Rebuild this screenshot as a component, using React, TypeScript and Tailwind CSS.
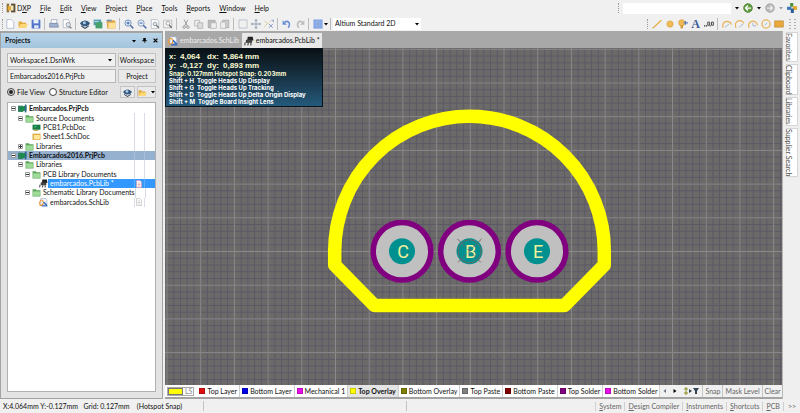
import type { ReactNode } from "react";

type IconName = keyof typeof icons;

const icons = {
    newDoc: <path d="M3 1h7l4 4v10H3z" fill="#fff" stroke="#8fa3c4" />,
    open: <><path d="M1 4h5l1 2h6v8H1z" fill="#e0a93a" /><path d="M4 8h12l-3 6H1z" fill="#ffd877" /></>,
    save: <><path d="M1 1h13l1 1v13H1z" fill="#4f74c8" /><path d="M4 1h8v6H4z" fill="#e8effc" /><path d="M5 10h7v5H5z" fill="#dde6f7" /></>,
    print: <><path d="M4 1h9l-1 6H3z" fill="#fff" stroke="#8793a8" /><path d="M1 7h13l1 6H1z" fill="#9fb2d2" stroke="#6c7c98" /></>,
    preview: <><path d="M2 1h8l2 3v10H2z" fill="#fff" stroke="#9aa3b3" /><circle cx="10" cy="9" r="3.5" fill="#dbe5f2" stroke="#777" /><path d="M12 12l3 3" stroke="#777" strokeWidth="2" /></>,
    layers: <><path d="M0 7c4-6 12-6 16 0-4 6-12 6-16 0z" fill="#33587f" /><path d="M2 10l6 4 6-4v2l-6 4-6-4z" fill="#2b3d57" /><circle cx="7" cy="6" r="2.500" fill="#a7c8e6" /></>,
    board: <><path d="M1 1h12v9H1z" fill="#4f9bb0" /><path d="M4 5h11v10H4z" fill="#45a06a" /><path d="M2 3h7v2H2z" fill="#aed4e2" /></>,
    sheet: <><path d="M1 2h12l2 2v11H2z" fill="#e2a944" /><path d="M4 6h11v9H4z" fill="#ffe29a" /><path d="M1 1h8v3H1z" fill="#7d93a9" /></>,
    zoomIn: <><circle cx="6.500" cy="6.500" r="5" fill="#e4effc" stroke="#6f8cb8" strokeWidth="1.500" /><path d="M10 10l5 5" stroke="#5675a8" strokeWidth="2.500" /><path d="M4 6.500h5M6.500 4v5" stroke="#345c9e" strokeWidth="1.500" /></>,
    zoomOut: <><circle cx="6.500" cy="6.500" r="5" fill="#e4effc" stroke="#8a9cba" strokeWidth="1.500" /><path d="M10 10l5 5" stroke="#5675a8" strokeWidth="2.500" /><path d="M4 6.500h5" stroke="#345c9e" strokeWidth="1.500" /></>,
    zoomPage: <><path d="M2 1h9l3 3v11H2z" fill="#fff" stroke="#9aa3b3" /><circle cx="8" cy="8" r="3" fill="#dbe5f2" stroke="#777" /><path d="M10 10l4 4" stroke="#666" strokeWidth="2" /></>,
    zoomArea: <><path d="M1 2h13v12H1z" fill="#f5f5f5" stroke="#a2a2a2" /><circle cx="8" cy="7" r="3" fill="#fff" stroke="#777" /><path d="M10 10l4 4" stroke="#666" strokeWidth="2" /></>,
    cut: <><path d="M5 1l5 10M11 1L6 11" stroke="#999" strokeWidth="1.500" /><circle cx="5" cy="13" r="2" fill="none" stroke="#999" strokeWidth="1.500" /><circle cx="11" cy="13" r="2" fill="none" stroke="#999" strokeWidth="1.500" /></>,
    copy: <><path d="M1 2h8v9H1z" fill="#eee" stroke="#a0a0a0" /><path d="M6 6h8v9H6z" fill="#ddd" stroke="#a0a0a0" /></>,
    paste: <><path d="M2 2h11v12H2z" fill="#bbb" stroke="#999" /><path d="M6 6h9v9H6z" fill="#eee" stroke="#aaa" /></>,
    stamp: <><path d="M4 2h10v12H4z" fill="#ccc" stroke="#999" /><path d="M1 5h8v10H1z" fill="#eee" stroke="#aaa" /></>,
    marquee: <path d="M1.500 1.500h13v13h-13z" fill="none" stroke="#a2aab8" />,
    move: <path d="M8 0v16M0 8h16M6 3l2-2 2 2M6 13l2 2 2-2M3 6L1 8l2 2M13 6l2 2-2 2" fill="none" stroke="#8590a5" strokeWidth="1.300" />,
    deselect: <><path d="M1 3l4 4M1 12l9-9" stroke="#d2b76a" strokeWidth="1.500" strokeDasharray="2 1" /><path d="M8 8l6 6M14 8l-6 6M12 2h3v3" stroke="#8196c4" strokeWidth="1.500" fill="none" /></>,
    undo: <><path d="M4 5c5-3 11 1 6 9" fill="none" stroke="#6b90d6" strokeWidth="2.500" /><path d="M1 2v7h7z" fill="#6b90d6" /></>,
    redo: <><path d="M12 5C7 2 1 6 6 14" fill="none" stroke="#bbb" strokeWidth="2.500" /><path d="M15 2v7H8z" fill="#bbb" /></>,
    grid: <path d="M1 1h14v14H1zM1 5.500h14M1 10h14M5.500 1v14M10 1v14" fill="#84a5df" stroke="#9bb7ea" />,
    line: <path d="M1 15L15 2" stroke="#e6a93f" strokeWidth="2" />,
    pad: <circle cx="8" cy="8" r="5" fill="#f0ba55" stroke="#d59a35" />,
    via: <><circle cx="6" cy="6" r="5" fill="#f0ba55" stroke="#d59a35" /><path d="M4 10h4v5H4z" fill="#d59a35" /><path d="M9 6h7M12 3v6" stroke="#5c80ba" strokeWidth="2" /></>,
    coord: <><path d="M0 11h2M3 11h2" stroke="#333" strokeWidth="2" /><path d="M6 5h3v5H6zM12 5h3v5h-3zM10 10v2" fill="none" stroke="#444" strokeWidth="1.500" /></>,
    arc1: <><path d="M2 14A7 7 0 1 1 15 9" fill="none" stroke="#e9b257" strokeWidth="2" /><path d="M5 13l6-5" stroke="#9fb0cc" strokeWidth="1.500" /></>,
    arc2: <><path d="M2 14A7 7 0 1 1 14 7" fill="none" stroke="#e9b257" strokeWidth="2" /><path d="M7 13l6-5" stroke="#9fb0cc" strokeWidth="1.500" /></>,
    arc3: <><path d="M2 14A7 7 0 1 1 15 10" fill="none" stroke="#e9b257" strokeWidth="2" /><path d="M8 6v5h5" fill="none" stroke="#9fb0cc" strokeWidth="1.500" /></>,
    ring: <><circle cx="8" cy="8" r="6.500" fill="none" stroke="#e9b257" strokeWidth="2" /><path d="M6 10l4-4" stroke="#9fb0cc" strokeWidth="1.500" /></>,
    fill: <path d="M1 3h14v10H1z" fill="#e9a93c" stroke="#b98532" />,
    back: <><circle cx="8" cy="8" r="7" fill="#5e9c3f" stroke="#3f7426" /><path d="M13 8H4M8 4L4 8l4 4" fill="none" stroke="#fff" strokeWidth="2" /></>,
    forward: <><circle cx="8" cy="8" r="7" fill="#b5b5b5" stroke="#9c9c9c" /><path d="M3 8h9M8 4l4 4-4 4" fill="none" stroke="#eee" strokeWidth="2" /></>,
    home: <><path d="M5 0h5v6H5z" fill="#4b8f3d" /><path d="M0 6h7v5H0z" fill="#3d77b8" /><path d="M9 5h7v6H9z" fill="#e4a72e" /><path d="M6 9h5v7H6z" fill="#2f5f9b" /></>,
    dxp: <><path d="M1 1h4v14H1z" fill="#8f743b" /><path d="M8 1h7v14H8z" fill="#5f4f35" /><path d="M3 5h5v7H3z" fill="#e0ab3b" /><path d="M8 4h4v8H8z" fill="#f5e6c0" /></>,
    schLib: <><path d="M3 1h9l2 3v8H3z" fill="#f3f6fb" stroke="#8fa0c0" /><path d="M1 8c2-6 5-6 7 0l-2 5H2z" fill="none" stroke="#ee9b3c" strokeWidth="2" /><path d="M8 7l6 6M5 14h10" stroke="#3c6dc0" strokeWidth="2.500" /></>,
    pcbLib: <><path d="M6 1h8l1 6H5z" fill="#222" /><path d="M3 6h10v5H3z" fill="#444" /><path d="M2 10l-1 5M7 11l-1 4M11 11v4" stroke="#555" strokeWidth="2" /></>,
    project: <><path d="M0 3h9v11H0z" fill="#2e7f60" /><path d="M3 5l12-2v8L5 14z" fill="#1c8c4d" /><path d="M12 1h3v14h-3z" fill="#33658f" /></>,
    folder: <><path d="M1 2h6l1 2h7v11H1z" fill="#5ca55c" /><path d="M2 6h12v8H2z" fill="#9fdc99" /></>,
    pcbDoc: <><path d="M1 3h14v9H1z" fill="#157a43" /><path d="M3 12h8v2H3z" fill="#c3a23d" /><path d="M4 5h4v3H4z" fill="#3fb478" /></>,
    schDoc: <><path d="M1 3h14v11H1z" fill="#d99f2f" /><path d="M3 5h11v8H3z" fill="#ffe79a" /></>,
    page: <><path d="M3 1h7l3 3v11H3z" fill="#fff" stroke="#aaa" /><path d="M5 6h6M5 9h6M5 12h6" stroke="#aaa" /></>,
    pageRed: <><path d="M3 1h7l3 3v11H3z" fill="#fff" stroke="#e88a92" /><path d="M5 6h6M5 9h6M5 12h6" stroke="#e06a74" /></>,
};

function Icon({ name, className = "size-[10px]" }: { name: IconName; className?: string }) {
    return (
        <svg viewBox="0 0 16 16" className={`shrink-0 ${className}`} aria-hidden="true">
            {icons[name]}
        </svg>
    );
}

function Caret({ className = "fill-black" }: { className?: string }) {
    return (
        <svg viewBox="0 0 8 8" className={`size-1 shrink-0 ${className}`} aria-hidden="true">
            <path d="M0 2h8L4 7z" />
        </svg>
    );
}

function ToolButton({ name }: { name: IconName }) {
    return (
        <button type="button" aria-label={name} className="flex h-3 w-[13px] shrink-0 items-center justify-center">
            <Icon name={name} />
        </button>
    );
}

function Grip() {
    return <span className="h-[10px] w-px shrink-0 border-l border-dotted border-[#9a9a9a]" />;
}

const menus = ["File", "Edit", "View", "Project", "Place", "Tools", "Reports", "Window", "Help"];

const toolGroups: IconName[][] = [
    ["newDoc", "open", "save"],
    ["print", "preview"],
    ["layers", "board", "sheet"],
    ["zoomIn", "zoomOut", "zoomPage", "zoomArea"],
    ["cut", "copy", "paste", "stamp"],
    ["marquee", "move", "deselect"],
    ["undo", "redo"],
];

function MenuBar() {
    return (
        <header className="flex h-4 items-center pl-[2px] pr-[3px]">
            <Grip />
            <nav className="flex items-center gap-[9px] pl-[3px]">
                <button type="button" className="flex items-center gap-px">
                    <Icon name="dxp" />
                    <span>D<u>X</u>P</span>
                </button>
                {menus.map((menu) => (
                    <button type="button" key={menu} className="first-letter:underline">
                        {menu}
                    </button>
                ))}
            </nav>
            <div className="ml-auto flex items-center gap-1">
                <Grip />
                <input aria-label="Address" className="h-[11px] w-[108px] bg-white" />
                <Caret />
                <button type="button" aria-label="Back"><Icon name="back" /></button>
                <Caret />
                <button type="button" aria-label="Forward"><Icon name="forward" /></button>
                <Caret className="fill-gray-400" />
                <button type="button" aria-label="Home"><Icon name="home" /></button>
            </div>
        </header>
    );
}

function ToolBar() {
    return (
        <div className="flex h-[15px] items-center pl-[2px] pr-[3px]">
            <Grip />
            {toolGroups.map((group) => (
                <div key={group[0]} className="flex items-center">
                    {group.map((name) => <ToolButton key={name} name={name} />)}
                    <span className="mx-[2px] h-3 w-px bg-[#bcbcbc]" />
                </div>
            ))}
            <ToolButton name="grid" />
            <Caret />
            <span className="mx-[2px] h-3 w-px bg-[#bcbcbc]" />
            <div className="flex h-3 w-[88px] items-center bg-white pr-[2px]">
                <select aria-label="View configuration" className="w-full appearance-none pl-[2px]">
                    <option>Altium Standard 2D</option>
                </select>
                <Caret />
            </div>
            <div className="ml-auto flex items-center">
                <Grip />
                <span className="flex items-center pl-[2px]">
                    <ToolButton name="line" />
                    <ToolButton name="pad" />
                    <ToolButton name="via" />
                    <button type="button" aria-label="String" className="w-[13px] font-['Liberation_Serif',serif] text-[12px] leading-3 font-bold text-[#3d5f96]">A</button>
                    <ToolButton name="coord" />
                </span>
                <span className="mx-[2px] h-3 w-px bg-[#bcbcbc]" />
                <ToolButton name="arc1" />
                <ToolButton name="arc2" />
                <ToolButton name="arc3" />
                <ToolButton name="ring" />
                <ToolButton name="fill" />
                <svg viewBox="0 0 8 10" className="ml-1 h-[10px] w-2 text-gray-500" aria-hidden="true">
                    <path d="M1 0v10M6 0v10" stroke="currentColor" strokeDasharray="1 2" />
                </svg>
            </div>
        </div>
    );
}

type TreeRow = {
    label: string;
    icon: IconName;
    indent: string;
    toggle?: "minus" | "plus";
    state?: "project" | "active" | "selected";
    doc?: IconName;
};

const tree: TreeRow[] = [
    { label: "Embarcados.PrjPcb", icon: "project", indent: "pl-[3px]", toggle: "minus", state: "project" },
    { label: "Source Documents", icon: "folder", indent: "pl-[10px]", toggle: "minus" },
    { label: "PCB1.PcbDoc", icon: "pcbDoc", indent: "pl-6" },
    { label: "Sheet1.SchDoc", icon: "schDoc", indent: "pl-6" },
    { label: "Libraries", icon: "folder", indent: "pl-[10px]", toggle: "plus" },
    { label: "Embarcados2016.PrjPcb", icon: "project", indent: "pl-[3px]", toggle: "minus", state: "active" },
    { label: "Libraries", icon: "folder", indent: "pl-[10px]", toggle: "minus" },
    { label: "PCB Library Documents", icon: "folder", indent: "pl-[17px]", toggle: "minus" },
    { label: "embarcados.PcbLib *", icon: "pcbLib", indent: "pl-[31px]", state: "selected", doc: "pageRed" },
    { label: "Schematic Library Documents", icon: "folder", indent: "pl-[17px]", toggle: "minus" },
    { label: "embarcados.SchLib", icon: "schLib", indent: "pl-[31px]", doc: "page" },
];

function TreeItem({ row }: { row: TreeRow }) {
    const bold = row.state === "project" || row.state === "active";
    return (
        <li
            role="treeitem"
            className={`flex items-stretch ${row.state === "active" ? "bg-[#96b0d0]" : ""} ${bold ? "font-bold" : ""}`}
        >
            <span className={`flex items-center gap-[2px] ${row.indent}`}>
                {row.toggle && (
                    <svg viewBox="0 0 5 5" className="size-[5px] shrink-0">
                        <path d="M.5.5h4v4h-4z" fill="#fff" stroke="#999" />
                        <path d={row.toggle === "plus" ? "M1 2.500h3M2.500 1v3" : "M1 2.500h3"} stroke="#333" />
                    </svg>
                )}
                <Icon name={row.icon} className="size-[9px]" />
            </span>
            <span className={`flex flex-1 items-center pl-[2px] whitespace-nowrap ${row.state === "selected" ? "bg-[#3399ff] text-white" : ""}`}>
                {row.label}
            </span>
            <span className={`flex w-[21px] items-center border-l ${row.state ? "border-white/20" : "border-[#d9dde6]"} ${row.state === "selected" ? "bg-[#3399ff]" : ""}`}>
                <span className={`flex w-[10px] items-center self-stretch border-r ${row.state ? "border-white/20" : "border-[#d9dde6]"}`}>
                    {row.doc && <Icon name={row.doc} className="size-2" />}
                </span>
            </span>
        </li>
    );
}

function PanelButton({ label, children }: { label?: string; children: ReactNode }) {
    return (
        <button type="button" aria-label={label} className="flex h-full flex-1 items-center justify-center gap-1 border border-[#c4c4c4] bg-[#e9e9e9]">
            {children}
        </button>
    );
}

function ProjectsPanel() {
    return (
        <aside className="flex w-[163px] shrink-0 flex-col border border-t-2 border-[#a3a3a3] bg-[#e3e3e3]">
            <div className="flex h-[15px] items-center gap-[6px] bg-gradient-to-b from-[#b9d4e8] to-[#a3c4de] px-1">
                <h2 className="font-bold">Projects</h2>
                <Caret className="ml-auto fill-black" />
                <svg viewBox="0 0 8 8" className="size-[5px]"><path d="M2 0h4v4h2v1H5v3H4V5H0V4h2z" /></svg>
                <svg viewBox="0 0 8 8" className="size-[5px]"><path d="M1 1l6 6M7 1L1 7" stroke="#000" strokeWidth="2" /></svg>
            </div>
            <div className="flex flex-1 flex-col px-[6px] pt-[5px] pb-[6px]">
                <div className="flex h-[14px] gap-[2px]">
                    <div className="flex w-[109px] items-center border border-[#b8b8b8] bg-[#f0f0f0] pr-[3px]">
                        <select aria-label="Workspace" className="w-full appearance-none pl-[2px]">
                            <option>Workspace1.DsnWrk</option>
                        </select>
                        <Caret />
                    </div>
                    <PanelButton>Workspace</PanelButton>
                </div>
                <div className="mt-[2px] flex h-[14px] gap-[2px]">
                    <input aria-label="Project" defaultValue="Embarcados2016.PrjPcb" className="w-[109px] border border-[#b8b8b8] bg-[#f0f0f0] pl-[2px]" />
                    <PanelButton>Project</PanelButton>
                </div>
                <div className="mt-[2px] flex h-[14px] items-center">
                    <label className="flex items-center gap-[2px]">
                        <input type="radio" name="view" defaultChecked className="size-2 appearance-none rounded-full border border-[#444] bg-white bg-clip-content p-px checked:bg-[#222]" />
                        File View
                    </label>
                    <label className="flex items-center gap-[2px] pl-1">
                        <input type="radio" name="view" className="size-2 appearance-none rounded-full border border-[#444] bg-white" />
                        Structure Editor
                    </label>
                    <div className="ml-auto flex h-3 w-9 gap-[2px]">
                        <PanelButton label="Compile"><Icon name="layers" className="size-[9px]" /></PanelButton>
                        <PanelButton label="Options"><Icon name="open" className="size-[9px]" /><Caret /></PanelButton>
                    </div>
                </div>
                <div className="mt-[3px] flex-1 border border-[#b0b0b0] bg-white pt-px">
                    <ul role="tree" className="grid h-[103px] auto-rows-fr grid-cols-[minmax(0,1fr)]">
                        {tree.map((row, i) => <TreeItem key={i} row={row} />)}
                    </ul>
                </div>
            </div>
        </aside>
    );
}

const pads = [
    { name: "C", x: 402 },
    { name: "B", x: 469.500 },
    { name: "E", x: 537 },
];

function Board() {
    return (
        <svg viewBox="165 48 617 337" preserveAspectRatio="xMidYMid slice" className="absolute inset-0 size-full">
            <defs>
                <pattern id="minor" x="469.800" y="251" width="6.740" height="6.740" patternUnits="userSpaceOnUse">
                    <path d="M0 .5h7M.5 0v7" stroke="#5a5965" strokeWidth="1" />
                </pattern>
                <pattern id="major" x="469.800" y="251" width="33.700" height="33.700" patternUnits="userSpaceOnUse">
                    <path d="M0 .5h34M.5 0v34" stroke="#8b8989" strokeWidth="1" />
                </pattern>
            </defs>
            <rect x="165" y="48" width="618" height="338" fill="#6c6969" />
            <rect x="165" y="48" width="618" height="338" fill="url(#minor)" />
            <rect x="165" y="48" width="618" height="338" fill="url(#major)" />
            <path
                d="M334.700 265V251A134.800 134.800 0 0 1 604.300 251V265L564.500 305.500H374.500z"
                fill="none"
                stroke="#ffff00"
                strokeWidth="13.500"
                strokeLinejoin="round"
            />
            {pads.map((pad) => (
                <g key={pad.name}>
                    <circle cx={pad.x} cy="251.300" r="28.800" fill="#c0c0c0" stroke="#800080" strokeWidth="5.500" />
                    <circle cx={pad.x} cy="251.300" r="13" fill="#009090" />
                    <text x={pad.x + 1} y="258" textAnchor="middle" fontSize="18" fill="#f0f09a" className="font-[Roboto,sans-serif]">{pad.name}</text>
                </g>
            ))}
            <g fill="none" stroke="#6c6969">
                <circle cx="469.500" cy="251.300" r="11.500" />
                <path d="M457.500 239l24 24M481.500 239l-24 24" strokeDasharray="5 2" />
            </g>
        </svg>
    );
}

const shortcuts = [
    ["H", "Toggle Heads Up Display"],
    ["G", "Toggle Heads Up Tracking"],
    ["D", "Toggle Heads Up Delta Origin Display"],
    ["M", "Toggle Board Insight Lens"],
];

function HeadsUp() {
    return (
        <div className="absolute top-0 left-0 w-[158px] border border-[#0a141c] bg-gradient-to-b from-[#0a1116] to-[#245a7c] px-[3px] pt-[3px] pb-px font-[Inter,sans-serif] text-[6px] leading-[7px] font-bold whitespace-pre text-white">
            <div className="grid w-[90px] grid-cols-[11px_27px_16px_22px_auto] font-['Liberation_Sans',sans-serif] text-[8px] leading-[9px] text-[#fbfbd0]">
                <span>x:</span><span>4,064</span><span>dx:</span><span>5,864</span><span>mm</span>
                <span>y:</span><span>-0,127</span><span>dy:</span><span>0,893</span><span>mm</span>
            </div>
            <p className="text-[#fbfbd0]">Snap: 0.127mm Hotspot Snap: 0.203mm</p>
            {shortcuts.map(([key, text]) => (
                <p key={key}>Shift + {key}  {text}</p>
            ))}
        </div>
    );
}

const layers = [
    { name: "Top Layer", color: "bg-[#e01010]" },
    { name: "Bottom Layer", color: "bg-[#0000e8]" },
    { name: "Mechanical 1", color: "bg-[#e810e8]" },
    { name: "Top Overlay", color: "bg-[#ffff00]", active: true },
    { name: "Bottom Overlay", color: "bg-[#808000]" },
    { name: "Top Paste", color: "bg-[#808080]" },
    { name: "Bottom Paste", color: "bg-[#800000]" },
    { name: "Top Solder", color: "bg-[#800080]" },
    { name: "Bottom Solder", color: "bg-[#e810e8]" },
];

function LayerBar() {
    return (
        <div className="flex h-[14px] items-center border-b-2 border-[#a3a3a3] bg-white pl-[2px] whitespace-nowrap">
            <button type="button" className="flex h-[9px] items-center border border-[#aaa] pr-px leading-[7px] text-[#888]">
                <span className="mr-[2px] h-full w-[15px] border border-[#777] bg-[#ffff00]" />
                LS
            </button>
            <div className="flex flex-1 items-center self-stretch pl-[3px]">
                {layers.map((layer) => (
                    <button
                        type="button"
                        key={layer.name}
                        className={`flex items-center gap-[2px] self-stretch border-r border-[#d0d0d0] px-[2px] ${layer.active ? "bg-[#e4e4e4] font-bold" : ""}`}
                    >
                        <span className={`size-[6px] border border-black/20 ${layer.color}`} />
                        {layer.name}
                    </button>
                ))}
            </div>
            <div className="flex items-center self-stretch bg-[#f0f0f0]">
                <button type="button" aria-label="Scroll left" className="w-[10px]"><svg viewBox="0 0 8 8" className="mx-auto size-1 fill-gray-500"><path d="M6 0v8L1 4z" /></svg></button>
                <button type="button" aria-label="Scroll right" className="w-[10px]"><svg viewBox="0 0 8 8" className="mx-auto size-1"><path d="M1 0v8l6-4z" /></svg></button>
                <svg viewBox="0 0 16 8" className="mx-[3px] h-2 w-4">
                    <path d="M2 1h2v2H2zM2 5h2v2H2z" fill="none" stroke="#8c8c20" />
                    <path d="M6 2v4l3-2zM10 1h6l-2 3v3h-2V4z" fill="#345" />
                </svg>
                {["Snap", "Mask Level", "Clear"].map((label) => (
                    <button type="button" key={label} className="self-stretch border-l border-[#c6c6c6] px-[2px] text-[#666]">{label}</button>
                ))}
            </div>
        </div>
    );
}

function SideTabs() {
    return (
        <div className="flex w-[18px] shrink-0 flex-col items-center gap-[2px] border-l border-[#b5b5b5] bg-[#efefef] pt-px">
            {["Favorites", "Clipboard", "Libraries", "Supplier Search"].map((tab) => (
                <button type="button" key={tab} className="w-3 border border-[#d5d5d5] bg-white py-1 text-[#555] [writing-mode:vertical-rl]">
                    {tab}
                </button>
            ))}
        </div>
    );
}

function StatusBar() {
    return (
        <footer className="flex h-[14px] items-center pl-[3px] whitespace-nowrap">
            <span className="w-[200px]">X:4.064mm Y:-0.127mm&nbsp;&nbsp; Grid: 0.127mm&nbsp;&nbsp;&nbsp; (Hotspot Snap)</span>
            <span className="h-[10px] w-[204px] border-x border-[#c4c4c4]" />
            <nav className="ml-auto flex text-[#666]">
                {["System", "Design Compiler", "Instruments", "Shortcuts", "PCB"].map((item) => (
                    <button type="button" key={item} className="border-l border-[#d0d0d0] px-[3px] first-letter:underline">{item}</button>
                ))}
                <button type="button" className="border-l border-[#d0d0d0] px-1">&gt;&gt;</button>
            </nav>
        </footer>
    );
}

export default function App() {
    return (
        <div className="flex min-h-screen flex-col bg-[#f0f0f0] font-[Lato,sans-serif] text-[7px] leading-[9px] text-[#111]">
            <MenuBar />
            <ToolBar />
            <div className="flex flex-1">
                <ProjectsPanel />
                <main className="ml-[2px] flex min-w-0 flex-1 flex-col bg-[#a8a8a8]">
                    <div role="tablist" className="flex h-[17px] items-stretch pt-[2px]">
                        <button type="button" role="tab" className="flex items-center gap-[2px] px-[3px] text-[#eee]">
                            <Icon name="schLib" />
                            embarcados.SchLib
                        </button>
                        <button type="button" role="tab" aria-selected="true" className="flex items-center gap-[2px] bg-[#e8e8e8] px-[2px]">
                            <Icon name="pcbLib" />
                            embarcados.PcbLib *
                        </button>
                    </div>
                    <div className="relative flex-1 overflow-hidden">
                        <Board />
                        <HeadsUp />
                    </div>
                    <LayerBar />
                </main>
                <SideTabs />
            </div>
            <StatusBar />
        </div>
    );
}
